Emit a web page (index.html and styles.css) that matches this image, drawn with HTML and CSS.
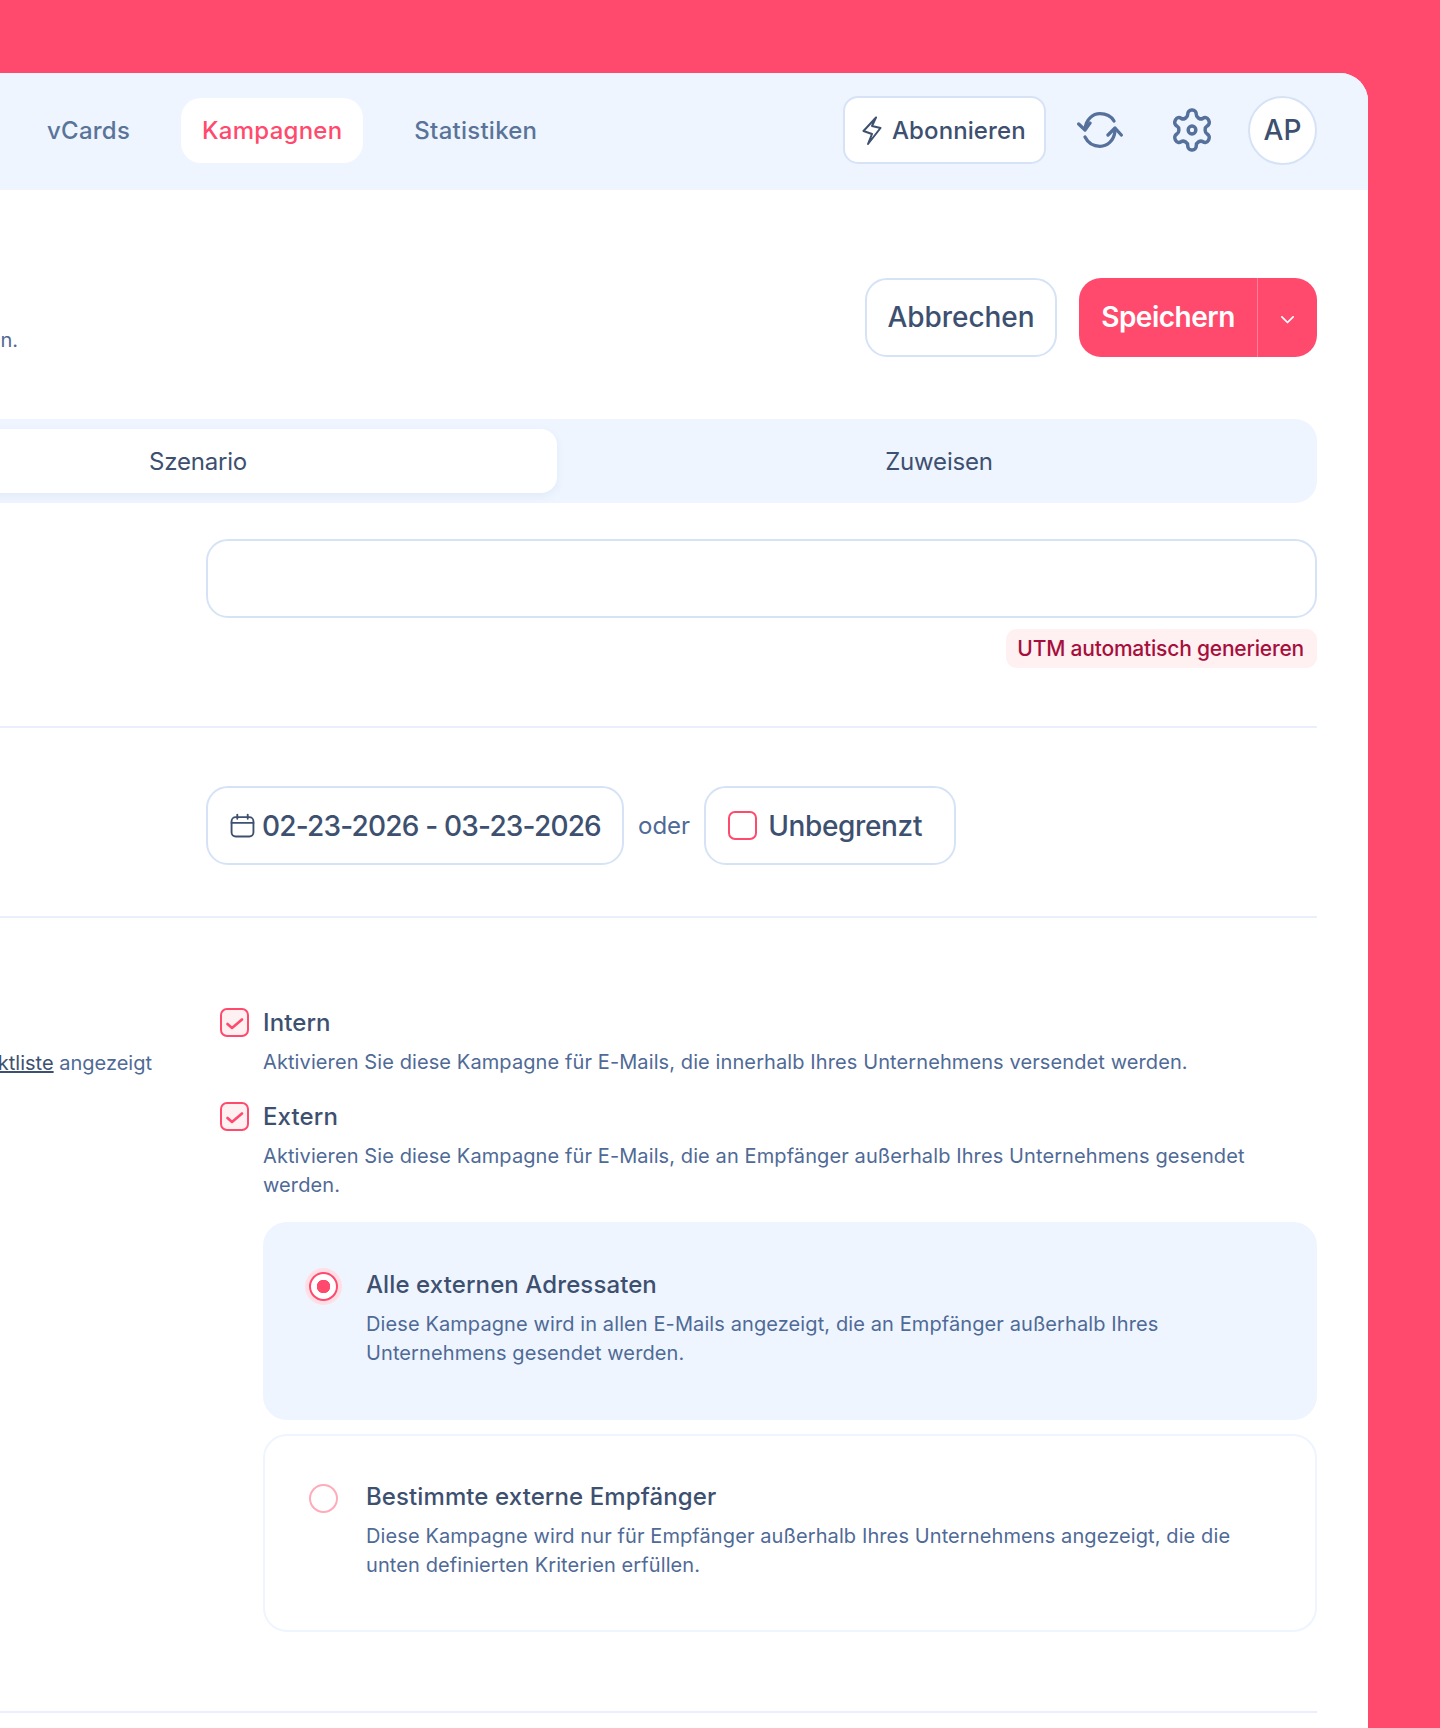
FILE: index.html
```html
<!DOCTYPE html>
<html lang="de">
<head>
<meta charset="utf-8">
<title>Kampagnen</title>
<link rel="stylesheet" href="styles.css">
</head>
<body>
<main class="panel">
  <header class="topbar">
    <nav class="nav">
      <a class="nav-item">vCards</a>
      <a class="nav-item nav-active">Kampagnen</a>
      <a class="nav-item">Statistiken</a>
    </nav>
    <div class="actions">
      <button class="subscribe">
        <svg class="bolt" viewBox="0 0 20 29" fill="none" stroke="currentColor" stroke-width="2" stroke-linejoin="round" stroke-linecap="round"><path d="M14 1.500 1.500 15l8.500 3-4 10 12.500-16-8.500-2z"/></svg>
        Abonnieren
      </button>
      <span class="icon-btn">
        <svg class="sync" viewBox="0 0 46 36" fill="none" stroke="currentColor" stroke-width="3.3" stroke-linecap="round" stroke-linejoin="round"><path d="M8 17C9 7 16 1.700 23 1.700c6 0 11 2.300 14 7.300"/><path d="M1.700 12 8 18l5-7"/><path d="M38 19c-1 10-8 15.300-15 15.300-6 0-12-3.300-15-9.300"/><path d="m31 23 7-7 6.300 7"/></svg>
      </span>
      <span class="icon-btn">
        <svg class="gear" viewBox="0 0 24 24" preserveAspectRatio="none" fill="none" stroke="currentColor" stroke-width="1.800" stroke-linecap="round" stroke-linejoin="round"><path d="M12.220 2h-.44a2 2 0 0 0-2 2v.18a2 2 0 0 1-1 1.730l-.43.25a2 2 0 0 1-2 0l-.15-.08a2 2 0 0 0-2.730.73l-.22.38a2 2 0 0 0 .73 2.730l.15.1a2 2 0 0 1 1 1.720v.51a2 2 0 0 1-1 1.740l-.15.09a2 2 0 0 0-.73 2.730l.22.38a2 2 0 0 0 2.730.73l.15-.08a2 2 0 0 1 2 0l.43.25a2 2 0 0 1 1 1.730V20a2 2 0 0 0 2 2h.44a2 2 0 0 0 2-2v-.18a2 2 0 0 1 1-1.730l.43-.25a2 2 0 0 1 2 0l.15.08a2 2 0 0 0 2.730-.73l.22-.39a2 2 0 0 0-.73-2.730l-.15-.08a2 2 0 0 1-1-1.740v-.5a2 2 0 0 1 1-1.740l.15-.09a2 2 0 0 0 .73-2.730l-.22-.38a2 2 0 0 0-2.730-.73l-.15.08a2 2 0 0 1-2 0l-.43-.25a2 2 0 0 1-1-1.730V4a2 2 0 0 0-2-2z"/><circle cx="12" cy="12" r="2"/></svg>
      </span>
      <span class="avatar">AP</span>
    </div>
  </header>

  <div class="content">
    <section class="title-row">
      <p class="intro">en.</p>
      <div class="title-actions">
        <button class="btn-cancel">Abbrechen</button>
        <div class="btn-save">
          <span class="save-label">Speichern</span>
          <span class="save-arrow">
            <svg viewBox="0 0 12 8" fill="none" stroke="currentColor" stroke-width="1.400" stroke-linecap="round" stroke-linejoin="round"><path d="M1.500 1.500 6 6l4.500-4.500"/></svg>
          </span>
        </div>
      </div>
    </section>

    <div class="tabs">
      <span class="tab tab-active">Szenario</span>
      <span class="tab tab-second">Zuweisen</span>
    </div>

    <section class="row row-name">
      <div class="row-left"></div>
      <div class="row-right">
        <div class="field"></div>
        <div class="utm-line"><span class="utm">UTM automatisch generieren</span></div>
      </div>
    </section>

    <section class="row row-date">
      <div class="row-left"></div>
      <div class="row-right date-line">
        <div class="date-box">
          <svg class="cal" viewBox="0 0 24 24" fill="none" stroke="currentColor" stroke-width="1.800" stroke-linecap="round" stroke-linejoin="round"><rect x="1.500" y="4" width="21" height="18.500" rx="4"/><path d="M7 1.500v4M17 1.500v4M1.500 9.500h21"/></svg>
          <span class="date-text">02-23-2026 - 03-23-2026</span>
        </div>
        <span class="oder">oder</span>
        <div class="unlimited">
          <span class="check-empty"></span>
          <span class="unlimited-text">Unbegrenzt</span>
        </div>
      </div>
    </section>

    <section class="row row-scope">
      <div class="row-left scope-left"><p class="scope-note"><u>Kontaktliste</u> angezeigt</p></div>
      <div class="row-right">
        <div class="opt">
          <span class="check"><svg viewBox="0 0 18 14" fill="none" stroke="currentColor" stroke-width="2.600" stroke-linecap="round" stroke-linejoin="round"><path d="M1.500 8 6 12l10-8.500"/></svg></span>
          <div class="opt-body">
            <div class="opt-title">Intern</div>
            <p class="desc">Aktivieren Sie diese Kampagne für E-Mails, die innerhalb Ihres Unternehmens versendet werden.</p>
          </div>
        </div>
        <div class="opt opt-ext">
          <span class="check"><svg viewBox="0 0 18 14" fill="none" stroke="currentColor" stroke-width="2.600" stroke-linecap="round" stroke-linejoin="round"><path d="M1.500 8 6 12l10-8.500"/></svg></span>
          <div class="opt-body">
            <div class="opt-title">Extern</div>
            <p class="desc">Aktivieren Sie diese Kampagne für E-Mails, die an Empfänger außerhalb Ihres Unternehmens gesendet werden.</p>
            <div class="card card-on">
              <span class="radio radio-on"></span>
              <div>
                <div class="opt-title">Alle externen Adressaten</div>
                <p class="desc card-desc">Diese Kampagne wird in allen E-Mails angezeigt, die an Empfänger außerhalb Ihres Unternehmens gesendet werden.</p>
              </div>
            </div>
            <div class="card">
              <span class="radio"></span>
              <div>
                <div class="opt-title">Bestimmte externe Empfänger</div>
                <p class="desc card-desc">Diese Kampagne wird nur für Empfänger außerhalb Ihres Unternehmens angezeigt, die die unten definierten Kriterien erfüllen.</p>
              </div>
            </div>
          </div>
        </div>
      </div>
    </section>
  </div>
</main>
</body>
</html>
```
FILE: styles.css
```css
* { box-sizing: border-box; }
html, body { margin: 0; height: 1728px; overflow: hidden; }
body {
  background: #ff4a6d;
  font-family: Inter, "Noto Sans", sans-serif;
  color: #3d5070;
  padding-top: 73px;
}
p { margin: 0; }
button { font: inherit; color: inherit; cursor: pointer; }

.panel {
  width: 1590px;
  margin-left: -222px;
  height: 1655px;
  background: #fff;
  border-radius: 28px 28px 0 0;
  overflow: hidden;
}

.topbar {
  height: 117px;
  background: #eef5ff;
  display: flex;
  align-items: center;
  padding: 0 51px 3px 248px;
}
.nav { display: flex; gap: 30px; }
.nav-item {
  height: 65px;
  line-height: 66px;
  padding: 0 21px;
  border-radius: 20px;
  font-size: 24px;
  font-weight: 500;
  color: #5a7499;
  letter-spacing: 0.25px;
}
.nav-active { background: #fff; color: #ff4a6d; }

.actions { margin-left: auto; display: flex; align-items: center; }
.subscribe {
  width: 203px;
  height: 68px;
  margin-right: 8px;
  padding: 0 0 0 17px;
  display: flex;
  align-items: center;
  gap: 10px;
  background: #fff;
  border: 2px solid #d6e3f7;
  border-radius: 15px;
  font-size: 24px;
  font-weight: 500;
  letter-spacing: 0.1px;
}
.bolt { width: 20px; height: 29px; flex: none; }
.icon-btn { width: 92px; display: flex; justify-content: center; color: #55709a; }
.sync { width: 46px; height: 36px; }
.gear { width: 46px; height: 48px; }
.avatar {
  width: 69px;
  height: 69px;
  margin-left: 10px;
  display: flex;
  align-items: center;
  justify-content: center;
  background: #fff;
  border: 2px solid #d6e3f7;
  border-radius: 50%;
  font-size: 28px;
  font-weight: 500;
}

.content { padding: 88px 51px 0; }

.title-row { display: flex; align-items: flex-start; justify-content: space-between; height: 79px; }
.intro { width: 189px; margin-top: 48px; text-align: right; font-size: 20px; line-height: 29px; color: #4f6a96; }
.title-actions { display: flex; gap: 22px; }
.btn-cancel {
  width: 192px;
  height: 79px;
  padding: 0 0 2px;
  background: #fff;
  border: 2px solid #d6e3f7;
  border-radius: 22px;
  font-size: 28px;
  font-weight: 500;
  letter-spacing: -0.05px;
}
.btn-save {
  width: 238px;
  height: 79px;
  display: flex;
  background: #ff4a6d;
  border-radius: 22px;
  color: #fff;
  font-size: 28px;
  font-weight: 600;
  letter-spacing: -0.5px;
}
.save-label { width: 178px; padding-bottom: 2px; display: flex; align-items: center; justify-content: center; }
.save-arrow {
  flex: 1;
  padding-top: 4px;
  display: flex;
  align-items: center;
  justify-content: center;
  border-left: 1px solid #ff7d96;
}
.save-arrow svg { width: 15px; height: 10px; }

.tabs {
  margin-top: 62px;
  height: 84px;
  padding: 10px 0 10px 10px;
  display: flex;
  background: #eef5ff;
  border-radius: 22px;
  font-size: 24px;
  color: #3d5070;
}
.tab { display: flex; align-items: center; justify-content: center; letter-spacing: -0.2px; }
.tab-active { width: 718px; background: #fff; border-radius: 16px; box-shadow: 0 3px 8px rgba(90, 120, 170, .08); }
.tab-second { flex: 1; padding-left: 4px; }

.row { display: grid; grid-template-columns: 377px 1fr; border-bottom: 2px solid #e9f0fb; }
.row-name { margin-top: 36px; padding-bottom: 58px; }
.row-date { padding: 58px 0 51px; }
.row-scope { padding: 90px 0 79px; }

.field { height: 79px; border: 2px solid #d6e3f7; border-radius: 22px; background: #fff; }
.utm-line { display: flex; justify-content: flex-end; margin-top: 11px; }
.utm {
  height: 39px;
  padding: 0 13px 0 11px;
  display: flex;
  align-items: center;
  background: #fff0f1;
  border-radius: 11px;
  color: #a60f3c;
  font-size: 21px;
  font-weight: 500;
  letter-spacing: -0.2px;
}

.date-line { display: flex; align-items: center; }
.date-box {
  width: 418px;
  height: 79px;
  padding-left: 22px;
  display: flex;
  align-items: center;
  gap: 7px;
  border: 2px solid #d6e3f7;
  border-radius: 22px;
  font-size: 28px;
  font-weight: 500;
}
.date-text { letter-spacing: -0.8px; white-space: nowrap; }
.cal { width: 25px; height: 25px; flex: none; }
.oder { margin: 0 14px; font-size: 24px; color: #4f6a96; }
.unlimited {
  width: 252px;
  height: 79px;
  padding-left: 22px;
  display: flex;
  align-items: center;
  gap: 11px;
  border: 2px solid #d6e3f7;
  border-radius: 22px;
  font-size: 28px;
  font-weight: 500;
}
.unlimited-text { letter-spacing: -0.35px; }
.check-empty { width: 29px; height: 29px; border: 2px solid #ff4a6d; border-radius: 7px; }

.scope-left { position: relative; }
.scope-note { position: absolute; right: 54px; top: 41px; font-size: 20px; line-height: 29px; white-space: nowrap; color: #4f6a96; }
.scope-note u { color: #3d5070; }

.opt { display: flex; margin-left: 14px; gap: 14px; }
.opt-ext { margin-top: 25px; }
.opt-body { flex: 1; min-width: 0; }
.check {
  width: 29px;
  height: 29px;
  flex: none;
  display: flex;
  align-items: center;
  justify-content: center;
  background: #fff0f1;
  border: 2px solid #ff4a6d;
  border-radius: 7px;
  color: #ff4a6d;
}
.check svg { width: 18px; height: 14px; }
.opt-title { font-size: 24px; font-weight: 500; line-height: 30px; letter-spacing: 0.1px; }
.desc { margin-top: 10px; font-size: 20px; line-height: 29px; color: #4f6a96; letter-spacing: 0.1px; }

.card {
  margin-top: 14px;
  height: 198px;
  padding: 46px 44px 0;
  display: flex;
  gap: 28px;
  border: 2px solid #eef5ff;
  border-radius: 24px;
}
.card-on { margin-top: 22px; background: #eef5ff; }
.card-desc { margin-top: 10px; }
.radio {
  width: 29px;
  height: 29px;
  flex: none;
  margin-top: 2px;
  background: #fff;
  border: 2px solid #ffabba;
  border-radius: 50%;
}
.radio-on {
  background: radial-gradient(circle, #ff4a6d 0 6.500px, #fff 7px);
  border-color: #ff4a6d;
  box-shadow: 0 0 0 4px #ffdfe5;
}
```
